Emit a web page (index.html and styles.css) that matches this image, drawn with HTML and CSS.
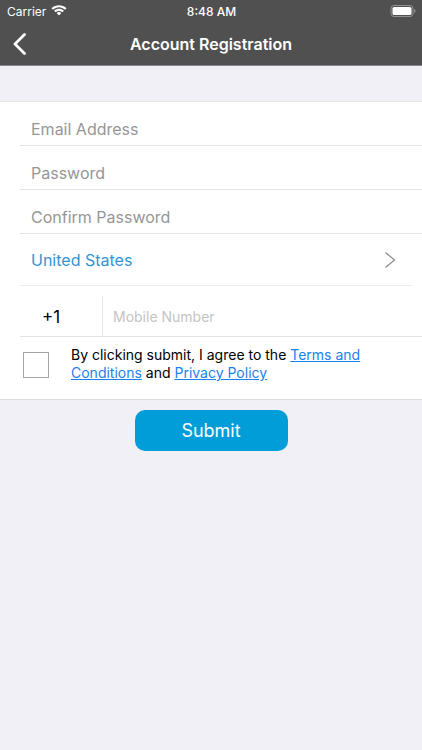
FILE: index.html
```html
<!DOCTYPE html>
<html lang="en">
<head>
<meta charset="utf-8">
<meta name="viewport" content="width=device-width, initial-scale=1">
<title>Account Registration</title>
<link rel="stylesheet" href="styles.css">
</head>
<body>
<header class="header">
  <div class="status">
    <div class="carrier">
      <span>Carrier</span>
      <svg width="16" height="12" viewBox="0 0 16 12" fill="#fff" aria-hidden="true">
        <path d="M8 2.2c2.2 0 4.3.9 5.8 2.4.1.1.3.1.4 0l1.1-1.1c.1-.1.1-.3 0-.4C11.300-.7 4.700-.7.7 3.100c-.1.1-.1.300 0 .400l1.100 1.100c.1.100.300.100.400 0C3.700 3.100 5.800 2.200 8 2.200z"/>
        <path d="M8 5.900c1.200 0 2.300.5 3.200 1.200.1.100.300.100.400 0l1.100-1.100c.1-.1.100-.3 0-.4-2.700-2.500-6.700-2.500-9.400 0-.1.100-.1.300 0 .4l1.100 1.100c.1.100.300.100.400 0C5.700 6.400 6.800 5.900 8 5.900z"/>
        <path d="M10.200 8.300c.1-.1.100-.3 0-.4-1.300-1.100-3.100-1.100-4.400 0-.1.100-.1.300 0 .4L7.800 10.300c.1.100.300.100.400 0z"/>
      </svg>
    </div>
    <span class="time">8:48 AM</span>
    <svg class="battery" width="26" height="12" viewBox="0 0 26 12" aria-hidden="true">
      <rect x="1" y=".5" width="22" height="11" rx="3" fill="none" stroke="#929292"/>
      <rect x="2.500" y="2" width="19" height="8" rx="1.600" fill="#fff"/>
      <path d="M24.200 4v4c.8-.3 1.300-1.100 1.300-2s-.5-1.700-1.300-2z" fill="#929292"/>
    </svg>
  </div>
  <div class="nav">
    <button class="back" type="button" aria-label="Back">
      <svg width="14" height="22" viewBox="0 0 14 22" fill="none" stroke="#fff" stroke-width="2.800" stroke-linecap="round" stroke-linejoin="round" aria-hidden="true"><path d="M12.500 1.500 3 11l9.500 9.500"/></svg>
    </button>
    <h1 class="title">Account Registration</h1>
  </div>
</header>
<form class="form">
  <div class="panel">
    <input class="field" type="email" placeholder="Email Address" aria-label="Email Address">
    <input class="field" type="password" placeholder="Password" aria-label="Password">
    <input class="field" type="password" placeholder="Confirm Password" aria-label="Confirm Password">
    <button class="country" type="button">
      <span>United States</span>
      <svg width="12" height="18" viewBox="0 0 12 18" fill="none" stroke="#8e8e8e" stroke-width="1.300" aria-hidden="true"><path d="M1.500 1.500 10.500 9l-9 7.500"/></svg>
    </button>
    <div class="phone">
      <span class="code">+1</span>
      <input class="mobile" type="tel" placeholder="Mobile Number" aria-label="Mobile Number">
    </div>
    <div class="consent">
      <input class="check" type="checkbox" id="agree">
      <label class="terms" for="agree">By clicking submit, I agree to the <a href="#terms">Terms and Conditions</a> and <a href="#privacy">Privacy Policy</a></label>
    </div>
  </div>
  <button class="submit" type="submit">Submit</button>
</form>
</body>
</html>
```
FILE: styles.css
```css
* {
  box-sizing: border-box;
}

body {
  margin: 0;
  min-height: 100vh;
  background: #f1f0f6;
  color: #000;
  font-family: Inter, "Liberation Sans", sans-serif;
}

button,
input {
  margin: 0;
  padding: 0;
  border: 0;
  border-radius: 0;
  background: none;
  font: inherit;
}

.header {
  background: #505050;
  border-bottom: 1px solid #85848a;
  color: #fff;
}

.status {
  display: grid;
  grid-template-columns: 1fr auto 1fr;
  align-items: center;
  height: 22px;
  padding: 0 6px 0 7px;
  font-size: 12px;
}

.carrier {
  display: flex;
  align-items: center;
  gap: 5px;
}

.time {
  font-weight: 500;
}

.battery {
  justify-self: end;
}

.nav {
  display: grid;
  grid-template-columns: 40px 1fr 40px;
  align-items: center;
  height: 43px;
}

.back {
  display: flex;
  padding-left: 12px;
}

.title {
  margin: 0;
  font-size: 16px;
  font-weight: 600;
  text-align: center;
}

.form {
  display: flex;
  flex-direction: column;
  align-items: center;
  padding-top: 35px;
}

.panel {
  display: flex;
  flex-direction: column;
  width: 100%;
  padding-left: 20px;
  background: #fff;
  border-top: 1px solid #e4e3e8;
  border-bottom: 1px solid #dddce1;
}

.field {
  height: 44px;
  padding: 10px 11px 0;
  border-bottom: 1px solid #e3e3e3;
  font-size: 16px;
}

.field::placeholder {
  color: #969696;
}

.country {
  display: flex;
  justify-content: space-between;
  align-items: center;
  height: 52px;
  margin-right: 10px;
  padding: 0 16px 0 11px;
  border-bottom: 1px solid #ebebeb;
  color: #3394d4;
  font-size: 16px;
}

.phone {
  display: flex;
  height: 51px;
  padding-top: 10px;
  border-bottom: 1px solid #e3e3e3;
}

.code {
  width: 83px;
  padding-left: 22px;
  border-right: 1px solid #e6e6e6;
  font-size: 17px;
  line-height: 42px;
}

.mobile {
  flex: 1;
  min-width: 0;
  padding-left: 10px;
  font-size: 14px;
}

.mobile::placeholder {
  color: #c4c4c4;
}

.consent {
  display: flex;
  align-items: flex-start;
  gap: 22px;
  padding: 9px 20px 17px 3px;
}

.check {
  flex: none;
  width: 26px;
  height: 26px;
  margin-top: 6px;
  border: 1px solid #a6a6a6;
  appearance: none;
}

.check:checked {
  background: #009dd9;
}

.terms {
  max-width: 300px;
  font-size: 14px;
  line-height: 18px;
}

.terms a {
  color: #1a7ff0;
}

.submit {
  width: 153px;
  height: 41px;
  margin-top: 10px;
  border-radius: 10px;
  background: #009dd9;
  color: #fff;
  font-size: 18px;
}
```
